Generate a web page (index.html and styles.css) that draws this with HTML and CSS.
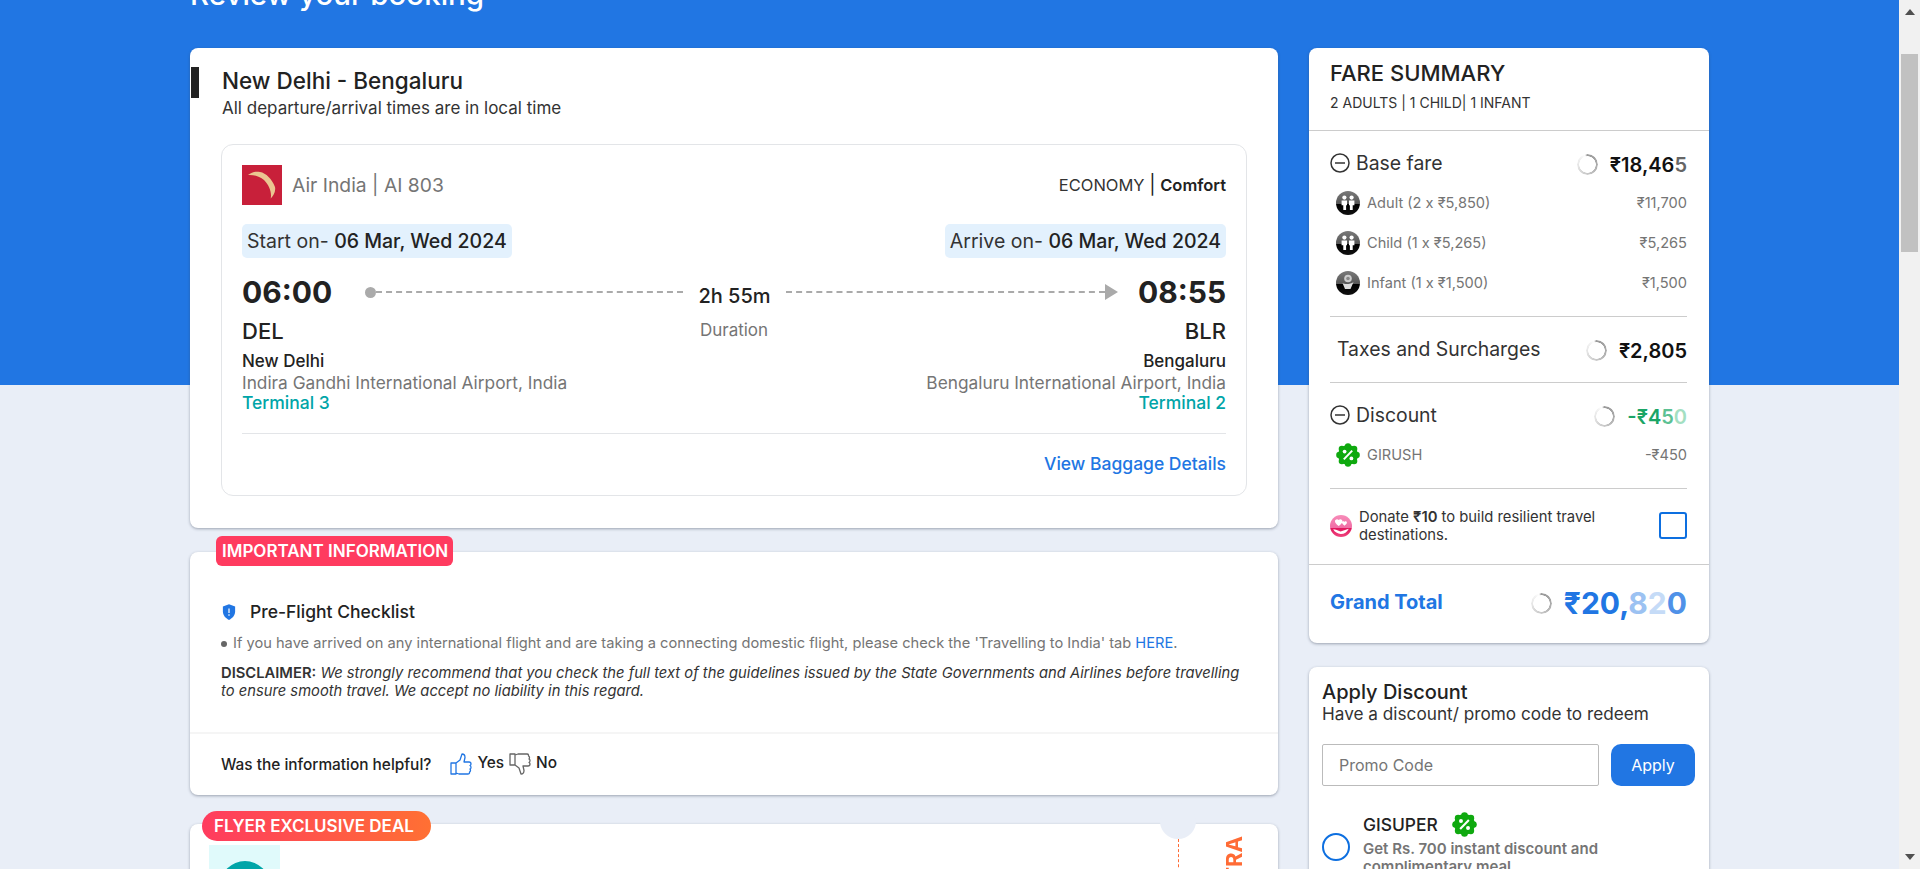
FILE: index.html
```html
<!DOCTYPE html>
<html>
  <head>
    <meta charset="UTF-8">
    <meta name="viewport" content="width=device-width, initial-scale=1.0">
    <title>Review your booking</title>
    <link rel="stylesheet" href="styles.css">
  </head>
  <body>
    <svg class="defs" width="0" height="0">
      <defs>
        <linearGradient id="pax-fill" x1="0" y1="0" x2="0" y2="1">
          <stop offset="0" stop-color="#7a7a7a"/>
          <stop offset="0.56" stop-color="#555"/>
          <stop offset="0.56" stop-color="#000"/>
          <stop offset="1" stop-color="#111"/>
        </linearGradient>
        <linearGradient id="donate-fill" x1="0" y1="0" x2="0" y2="1">
          <stop offset="0" stop-color="#f78cb9"/>
          <stop offset="0.58" stop-color="#f06ea5"/>
          <stop offset="0.58" stop-color="#e0145c"/>
          <stop offset="1" stop-color="#f0457f"/>
        </linearGradient>
        <g id="percent-badge">
          <circle cx="12" cy="12" r="10" fill="#0fa90f"/>
          <circle cx="12" cy="3.4" r="3.2" fill="#0fa90f"/>
          <circle cx="18.1" cy="5.9" r="3.2" fill="#0fa90f"/>
          <circle cx="20.6" cy="12" r="3.2" fill="#0fa90f"/>
          <circle cx="18.1" cy="18.1" r="3.2" fill="#0fa90f"/>
          <circle cx="12" cy="20.6" r="3.2" fill="#0fa90f"/>
          <circle cx="5.9" cy="18.1" r="3.2" fill="#0fa90f"/>
          <circle cx="3.4" cy="12" r="3.2" fill="#0fa90f"/>
          <circle cx="5.9" cy="5.9" r="3.2" fill="#0fa90f"/>
          <path d="M16.2 7.6 7.8 16.4" stroke="#fff" stroke-width="2"/>
          <circle cx="8.6" cy="8.6" r="1.9" fill="#fff"/>
          <circle cx="15.4" cy="15.4" r="1.9" fill="#fff"/>
        </g>
        <g id="minus-circle" fill="none" stroke="#333" stroke-width="1.5">
          <circle cx="10" cy="10" r="9"/>
          <path d="M5 10h10"/>
        </g>
        <g id="two-people" fill="#fff">
          <circle cx="8.4" cy="6.6" r="2.1"/>
          <circle cx="15.6" cy="6.6" r="2.1"/>
          <path d="M5.6 9.6h5.4v4.6h-.9V19H7.3v-4.8h-1.7zM13 9.6h5.4v4.6h-1.7V19h-2.8v-4.8H13z"/>
        </g>
      </defs>
    </svg>

    <div class="page">
      <h1 class="page-title">Review your booking</h1>

      <div class="layout">
        <div class="col-left">

          <section class="card trip">
            <div class="trip-head">
              <span class="trip-bar"></span>
              <div>
                <h2>New Delhi - Bengaluru</h2>
                <p>All departure/arrival times are in local time</p>
              </div>
            </div>

            <div class="leg">
              <div class="leg-top">
                <div class="airline">
                  <svg class="airline-logo" viewBox="0 0 40 40" width="40" height="40">
                    <rect width="40" height="40" fill="#c8203a"/>
                    <path d="M6 10c4-3 8-4 12-3 6 1 12 7 15 15 1 5-2 9-4.300 11.500C30 27 27 20 22 15c-5-4-11-5.500-16-5z" fill="#ebc691"/>
                  </svg>
                  <span>Air India | AI 803</span>
                </div>
                <div class="cabin">ECONOMY <span class="cabin-sep">|</span> <b>Comfort</b></div>
              </div>

              <div class="dates">
                <div class="date-pill">Start on- <b>06 Mar, Wed 2024</b></div>
                <div class="date-pill">Arrive on- <b>06 Mar, Wed 2024</b></div>
              </div>

              <div class="times">
                <div class="time">06:00</div>
                <div class="timeline">
                  <span class="dot"></span>
                  <span class="dash dash-left"></span>
                  <span class="elapsed">2h 55m</span>
                  <span class="dash dash-right"></span>
                  <span class="arrow"></span>
                </div>
                <div class="time time-end">08:55</div>
              </div>

              <div class="codes">
                <div class="code">DEL</div>
                <div class="duration">Duration</div>
                <div class="code code-end">BLR</div>
              </div>

              <div class="places">
                <div class="place">
                  <div class="city">New Delhi</div>
                  <div class="airport">Indira Gandhi International Airport, India</div>
                  <div class="terminal">Terminal 3</div>
                </div>
                <div class="place place-end">
                  <div class="city">Bengaluru</div>
                  <div class="airport">Bengaluru International Airport, India</div>
                  <div class="terminal">Terminal 2</div>
                </div>
              </div>

              <div class="baggage"><a href="#">View Baggage Details</a></div>
            </div>
          </section>

          <section class="card info">
            <div class="tag tag-important">IMPORTANT INFORMATION</div>
            <div class="info-body">
              <div class="info-title">
                <svg viewBox="0 0 16 18" width="14" height="16">
                  <path d="M8 0 15 2.6v5.6c0 4.4-2.9 8-7 9.8-4.1-1.8-7-5.4-7-9.8V2.6z" fill="#2176e3"/>
                  <path d="M8 5v5M8 11.6v1.6" stroke="#fff" stroke-width="1.4"/>
                </svg>
                <span>Pre-Flight Checklist</span>
              </div>
              <div class="info-item">
                <span class="bullet"></span>
                <span>If you have arrived on any international flight and are taking a connecting domestic flight, please check the 'Travelling to India' tab <a href="#">HERE</a>.</span>
              </div>
              <p class="disclaimer"><b>DISCLAIMER:</b> <i>We strongly recommend that you check the full text of the guidelines issued by the State Governments and Airlines before travelling to ensure smooth travel. We accept no liability in this regard.</i></p>
            </div>
            <div class="helpful">
              <span class="helpful-q">Was the information helpful?</span>
              <svg class="thumb-up" viewBox="0 0 24 24" width="24" height="24" fill="none" stroke="#2176e3" stroke-width="1.3" stroke-linejoin="round">
                <path d="M2 11h5v11H2zM7 11l4-3 2-6c2 0 3 1.500 3 3.500L15 10h5c1.500 0 2 1 2 2s-1 1.500-1 1.500 1 .5 1 2-1 1.500-1 1.500 .5 .5 .5 1.500-1 1.500-1 1.500 .5 2-1.500 2H10l-3-1"/>
              </svg>
              <span class="helpful-a">Yes</span>
              <svg class="thumb-down" viewBox="0 0 24 24" width="24" height="24" fill="none" stroke="#666" stroke-width="1.3" stroke-linejoin="round">
                <path d="M2 13h5V2H2zM7 13l4 3 2 6c2 0 3-1.500 3-3.500L15 14h5c1.500 0 2-1 2-2s-1-1.500-1-1.500 1-.5 1-2-1-1.500-1-1.500 .5-.5 .5-1.500-1-1.500-1-1.500 .5-2-1.500-2H10L7 3"/>
              </svg>
              <span class="helpful-a">No</span>
            </div>
          </section>

          <section class="card deal">
            <div class="tag tag-deal">FLYER EXCLUSIVE DEAL</div>
            <div class="deal-notch"></div>
            <div class="deal-cut"></div>
            <div class="deal-logo"><span class="deal-circle"></span></div>
            <div class="deal-side">EXTRA</div>
          </section>
        </div>

        <div class="col-right">
          <section class="card fare">
            <div class="fare-head">
              <h2>FARE SUMMARY</h2>
              <p>2 ADULTS | 1 CHILD| 1 INFANT</p>
            </div>

            <div class="fare-sec fare-base">
              <div class="fare-row">
                <div class="fare-label"><svg viewBox="0 0 20 20" width="20" height="20"><use href="#minus-circle"/></svg>Base fare</div>
                <div class="fare-value"><span class="spinner"></span><span class="amount">₹18,46<span class="fade-dark">5</span></span></div>
              </div>
              <div class="sub-row">
                <div class="sub-label">
                  <svg viewBox="0 0 24 24" width="24" height="24"><circle cx="12" cy="12" r="12" fill="url(#pax-fill)"/><use href="#two-people"/></svg>
                  Adult (2 x ₹5,850)
                </div>
                <div>₹11,700</div>
              </div>
              <div class="sub-row">
                <div class="sub-label">
                  <svg viewBox="0 0 24 24" width="24" height="24"><circle cx="12" cy="12" r="12" fill="url(#pax-fill)"/><use href="#two-people"/></svg>
                  Child (1 x ₹5,265)
                </div>
                <div>₹5,265</div>
              </div>
              <div class="sub-row">
                <div class="sub-label">
                  <svg viewBox="0 0 24 24" width="24" height="24">
                    <circle cx="12" cy="12" r="12" fill="url(#pax-fill)"/>
                    <circle cx="12" cy="7.500" r="3.800" fill="#ccc"/>
                    <circle cx="12" cy="7.500" r="1.800" fill="#888"/>
                    <path d="M6.500 12c2 1.500 8 1.500 11-1l-3 7H9z" fill="#ddd"/>
                  </svg>
                  Infant (1 x ₹1,500)
                </div>
                <div>₹1,500</div>
              </div>
            </div>

            <div class="fare-sec fare-taxes">
              <div class="fare-row">
                <div class="fare-label fare-label-flat">Taxes and Surcharges</div>
                <div class="fare-value"><span class="spinner"></span><span class="amount">₹2,805</span></div>
              </div>
            </div>

            <div class="fare-sec fare-discount">
              <div class="fare-row">
                <div class="fare-label"><svg viewBox="0 0 20 20" width="20" height="20"><use href="#minus-circle"/></svg>Discount</div>
                <div class="fare-value"><span class="spinner"></span><span class="amount amount-green">-₹4<span class="fade-green-1">5</span><span class="fade-green-2">0</span></span></div>
              </div>
              <div class="sub-row">
                <div class="sub-label">
                  <svg viewBox="0 0 24 24" width="24" height="24"><use href="#percent-badge"/></svg>
                  GIRUSH
                </div>
                <div>-₹450</div>
              </div>
            </div>

            <div class="donate">
              <svg viewBox="0 0 24 24" width="22" height="22">
                <circle cx="12" cy="12" r="12" fill="url(#donate-fill)"/>
                <path d="M9.500 5.500c-1.600-1.900-4.600-.4-4 2 .4 1.500 2.700 3.300 4 4.500 1.300-1.200 3.600-3 4-4.500.6-2.400-2.400-3.900-4-2zM15.800 7.500c-1-1.200-3-.3-2.600 1.300.3 1 1.700 2.100 2.600 2.900.9-.8 2.300-1.900 2.600-2.900.4-1.600-1.600-2.500-2.600-1.300z" fill="#fff"/>
                <path d="M3.500 15.500c2.500.5 5 1 8 2.500l9-3c-2 4-5.500 6-9 5.700-3-.2-6.500-2.200-8-5.200z" fill="#fff"/>
              </svg>
              <p>Donate <b>₹10</b> to build resilient travel destinations.</p>
              <span class="checkbox"></span>
            </div>

            <div class="grand">
              <div class="grand-label">Grand Total</div>
              <div class="fare-value"><span class="spinner"></span><span class="grand-amount">₹20,<span class="fade-blue-1">8</span><span class="fade-blue-2">2</span><span class="fade-blue-3">0</span></span></div>
            </div>
          </section>

          <section class="card apply">
            <h3>Apply Discount</h3>
            <p class="apply-sub">Have a discount/ promo code to redeem</p>
            <div class="promo">
              <input class="promo-input" type="text" placeholder="Promo Code">
              <button class="promo-btn">Apply</button>
            </div>
            <div class="coupon">
              <span class="radio"></span>
              <div>
                <div class="coupon-head">GISUPER <svg viewBox="0 0 24 24" width="25" height="25"><use href="#percent-badge"/></svg></div>
                <p class="coupon-text">Get Rs. 700 instant discount and complimentary meal</p>
              </div>
            </div>
          </section>
        </div>
      </div>
    </div>

    <div class="scrollbar">
      <svg class="scroll-arrow" viewBox="0 0 10 6" width="10" height="6"><path d="M5 0 10 6H0z" fill="#505050"/></svg>
      <div class="scroll-thumb"></div>
      <svg class="scroll-arrow scroll-down" viewBox="0 0 10 6" width="10" height="6"><path d="M5 6 10 0H0z" fill="#505050"/></svg>
    </div>
  </body>
</html>
```

FILE: styles.css
```css
* {
  box-sizing: border-box;
  margin: 0;
  padding: 0;
}

html, body {
  height: 869px;
  overflow: hidden;
}

body {
  display: flex;
  font-family: Inter, "Noto Sans", sans-serif;
  color: #222;
}

a {
  color: #2176e3;
  text-decoration: none;
}

.defs {
  position: absolute;
}

/* page is shown scrolled, so the title sits mostly above the fold */
.page {
  flex: 1;
  height: 869px;
  overflow: hidden;
  background: linear-gradient(#2176e3 385px, #e9eef7 385px);
}

.page-title {
  margin: -22px 0 0 190px;
  height: 32px;
  font-size: 29.500px;
  line-height: 32px;
  font-weight: 500;
  color: #fff;
}

.layout {
  display: flex;
  align-items: flex-start;
  gap: 31px;
  margin: 38px 0 0 190px;
}

.col-left {
  width: 1088px;
}

.col-right {
  width: 400px;
}

.card {
  background-color: #fff;
  border-radius: 8px;
  box-shadow: 0 1px 3px rgba(60, 70, 90, 0.45);
}

/* trip card */
.trip {
  height: 480px;
  padding: 19px 31px 0 0;
}

.trip-head {
  display: flex;
  align-items: flex-start;
}

.trip-bar {
  width: 8px;
  height: 31px;
  margin: 0 23px 0 1px;
  background-color: #222;
}

.trip-head h2 {
  margin-top: 1px;
  font-size: 22.500px;
  line-height: 26px;
  font-weight: 500;
}

.trip-head p {
  margin-top: 3px;
  font-size: 17px;
  line-height: 22px;
  color: #333;
}

.leg {
  height: 352px;
  margin: 25px 0 0 31px;
  padding: 20px 20px 0;
  border: 1px solid #e3e5e8;
  border-radius: 12px;
}

.leg-top {
  display: flex;
  justify-content: space-between;
  align-items: center;
}

.airline {
  display: flex;
  align-items: center;
  gap: 10px;
  font-size: 19.300px;
  color: #757575;
}

.cabin {
  margin-top: -1px;
  font-size: 16.500px;
  color: #333;
}

.cabin-sep {
  font-size: 19px;
  color: #222;
}

.cabin b {
  font-weight: 600;
  color: #222;
}

.dates {
  display: flex;
  justify-content: space-between;
  margin-top: 19px;
}

.date-pill {
  height: 34px;
  padding: 0 5px;
  border-radius: 5px;
  background-color: #e3f1fd;
  font-size: 19.500px;
  line-height: 34px;
  color: #333;
}

.date-pill b {
  font-weight: 500;
  color: #222;
}

.times {
  display: flex;
  align-items: flex-start;
  margin-top: 16px;
}

.time {
  width: 88px;
  font-size: 30px;
  line-height: 36px;
  font-weight: 700;
  white-space: nowrap;
}

.time-end {
  text-align: right;
  margin-left: 20px;
}

.timeline {
  flex: 1;
  display: flex;
  align-items: center;
  height: 36px;
  margin-left: 35px;
}

.dot {
  width: 11px;
  height: 11px;
  border-radius: 50%;
  background-color: #aaa;
}

.dash {
  height: 0;
  border-top: 2px dashed #aaa;
}

.dash-left {
  width: 307px;
}

.dash-right {
  flex: 1;
}

.elapsed {
  width: 103px;
  padding-top: 8px;
  text-align: center;
  font-size: 20px;
  font-weight: 500;
  white-space: nowrap;
}

.arrow {
  width: 0;
  height: 0;
  border-left: 13px solid #aaa;
  border-top: 8px solid transparent;
  border-bottom: 8px solid transparent;
}

.codes {
  display: grid;
  grid-template-columns: 1fr auto 1fr;
  align-items: center;
  margin-top: 7px;
}

.code {
  font-size: 22px;
  line-height: 28px;
  font-weight: 500;
}

.code-end {
  text-align: right;
}

.duration {
  margin-top: -2px;
  font-size: 17px;
  color: #757575;
}

.places {
  display: flex;
  justify-content: space-between;
  margin-top: 6px;
}

.place-end {
  text-align: right;
}

.city {
  font-size: 17px;
  line-height: 21px;
  font-weight: 500;
}

.airport {
  font-size: 17.300px;
  line-height: 21px;
  color: #757575;
}

.terminal {
  margin-top: -1px;
  font-size: 17.500px;
  line-height: 21px;
  font-weight: 500;
  color: #00a5a8;
}

.baggage {
  margin-top: 20px;
  padding-top: 19px;
  border-top: 1px solid #e3e5e8;
  text-align: right;
  font-size: 17.500px;
  line-height: 22px;
  font-weight: 500;
}

/* important information */
.tag {
  position: absolute;
  color: #fff;
  font-size: 17px;
  font-weight: 600;
  white-space: nowrap;
}

.info {
  position: relative;
  height: 243px;
  margin-top: 24px;
}

.tag-important {
  left: 26px;
  top: -16px;
  width: 237px;
  height: 30px;
  padding-left: 6px;
  line-height: 30px;
  border-radius: 6px;
  background-color: #ff3b5f;
}

.info-body {
  height: 180px;
  padding: 49px 31px 0;
}

.info-title {
  display: flex;
  align-items: center;
  gap: 14px;
  padding-left: 1px;
  font-size: 17.500px;
  line-height: 22px;
  font-weight: 500;
}

.info-item {
  display: flex;
  align-items: center;
  gap: 6px;
  margin-top: 10px;
  font-size: 14.650px;
  line-height: 20px;
  color: #757575;
}

.bullet {
  width: 6px;
  height: 6px;
  margin-top: 2px;
  border-radius: 50%;
  background-color: #666;
}

.disclaimer {
  margin-top: 11px;
  font-size: 14.750px;
  line-height: 18px;
  color: #333;
}

.disclaimer b {
  font-weight: 600;
}

.helpful {
  display: flex;
  align-items: center;
  height: 61px;
  padding-left: 31px;
  border-top: 2px solid #f5f5f5;
  font-size: 15.400px;
  font-weight: 500;
}

.helpful-q {
  margin-right: 18px;
  padding-top: 2px;
}

.helpful-a {
  margin: -2px 4px 0 4px;
}

/* deal card, cut off by the fold */
.deal {
  position: relative;
  height: 240px;
  margin-top: 29px;
  padding: 21px 0 0 19px;
}

.tag-deal {
  left: 12px;
  top: -13px;
  width: 229px;
  height: 30px;
  padding-left: 12px;
  line-height: 30px;
  border-radius: 15px;
  background: linear-gradient(90deg, #ff3b5f, #ff7033);
}

.deal-notch {
  position: absolute;
  left: 970px;
  top: -21px;
  width: 36px;
  height: 36px;
  border-radius: 50%;
  background-color: #e9eef7;
}

.deal-cut {
  position: absolute;
  left: 988px;
  top: 15px;
  height: 200px;
  border-left: 1px dashed #ff6b35;
}

.deal-logo {
  width: 71px;
  height: 200px;
  padding-top: 16px;
  background-color: #e0fafb;
}

.deal-circle {
  display: block;
  width: 50px;
  height: 50px;
  margin: 0 auto;
  border-radius: 50%;
  background-color: #00a5a8;
}

.deal-side {
  position: absolute;
  left: 1032px;
  top: 12px;
  writing-mode: vertical-rl;
  transform: rotate(180deg);
  font-size: 22px;
  line-height: 24px;
  font-weight: 700;
  color: #ff6b35;
}

/* fare summary */
.fare {
  height: 595px;
}

.fare-head {
  height: 83px;
  padding: 12px 21px 0;
  border-bottom: 1px solid #ccc;
}

.fare-head h2 {
  font-size: 22px;
  line-height: 26px;
  font-weight: 500;
}

.fare-head p {
  margin-top: 7px;
  font-size: 14px;
  line-height: 20px;
  color: #333;
}

.fare-sec {
  margin: 0 22px 0 21px;
  border-bottom: 1px solid #ccc;
}

.fare-base {
  height: 186px;
  padding-top: 20px;
}

.fare-taxes {
  height: 66px;
  padding-top: 20px;
}

.fare-discount {
  height: 106px;
  padding-top: 20px;
}

.fare-row {
  display: flex;
  justify-content: space-between;
  align-items: center;
  height: 24px;
}

.fare-label {
  display: flex;
  align-items: center;
  gap: 6px;
  font-size: 19.400px;
  color: #333;
}

.fare-label-flat {
  padding-left: 7px;
}

.fare-value {
  display: flex;
  align-items: center;
  gap: 12px;
  margin-top: 3px;
}

.spinner {
  width: 21px;
  height: 21px;
  border-radius: 50%;
  background: conic-gradient(#999 0deg, #aaa 90deg, #c4c4c4 170deg, #e4e4e4 260deg, #f4f4f4 320deg, #fff 345deg, #888 360deg);
  -webkit-mask: radial-gradient(circle, transparent 8px, #000 8.500px);
  mask: radial-gradient(circle, transparent 8px, #000 8.500px);
}

.amount {
  font-size: 20px;
  font-weight: 600;
  color: #111;
}

.amount-green {
  color: #1ba566;
}

.fade-dark {
  color: #666;
}

.fade-green-1 {
  color: #5cc193;
}

.fade-green-2 {
  color: #a4dfc2;
}

.sub-row {
  display: flex;
  justify-content: space-between;
  align-items: center;
  height: 24px;
  margin-top: 16px;
  padding-left: 6px;
  font-size: 14.600px;
  color: #757575;
}

.sub-label {
  display: flex;
  align-items: center;
  gap: 7px;
}

.donate {
  display: flex;
  align-items: center;
  gap: 7px;
  height: 75px;
  margin: 0 22px 0 21px;
  padding-bottom: 2px;
}

.donate p {
  width: 270px;
  font-size: 14.800px;
  line-height: 18px;
  color: #333;
}

.donate b {
  font-weight: 600;
}

.checkbox {
  width: 28px;
  height: 27px;
  margin-left: auto;
  border: 2px solid #0d6fe0;
  border-radius: 3px;
}

.grand {
  display: flex;
  justify-content: space-between;
  align-items: center;
  height: 77px;
  padding: 0 22px 3px 21px;
  border-top: 1px solid #ccc;
}

.grand-label {
  font-size: 20px;
  font-weight: 700;
  color: #2176e3;
}

.grand-amount {
  font-size: 30px;
  line-height: 32px;
  font-weight: 700;
  color: #2176e3;
}

.fade-blue-1 {
  color: #9cc2f2;
}

.fade-blue-2 {
  color: #c5dbf7;
}

.fade-blue-3 {
  color: #4f91e8;
}

/* apply discount, cut off by the fold */
.apply {
  height: 240px;
  margin-top: 24px;
  padding: 13px 14px 0 13px;
}

.apply h3 {
  font-size: 20px;
  line-height: 24px;
  font-weight: 500;
}

.apply-sub {
  font-size: 17.200px;
  line-height: 20px;
  color: #333;
}

.promo {
  display: flex;
  gap: 12px;
  margin-top: 20px;
}

.promo-input {
  width: 277px;
  height: 42px;
  padding-left: 16px;
  border: 1px solid #bbb;
  border-radius: 2px;
  font-family: Inter, "Noto Sans", sans-serif;
  font-size: 16px;
}

.promo-input::placeholder {
  color: #757575;
}

.promo-btn {
  width: 84px;
  height: 42px;
  border: none;
  border-radius: 10px;
  background-color: #2176e3;
  color: #fff;
  font-family: Inter, "Noto Sans", sans-serif;
  font-size: 16px;
}

.coupon {
  display: flex;
  align-items: flex-start;
  gap: 13px;
  margin-top: 27px;
}

.radio {
  flex: none;
  width: 28px;
  height: 28px;
  margin-top: 20px;
  border: 2px solid #0d6fe0;
  border-radius: 50%;
}

.coupon-head {
  display: flex;
  align-items: center;
  gap: 14px;
  height: 22px;
  font-size: 17.400px;
  font-weight: 500;
}

.coupon-text {
  max-width: 270px;
  margin-top: 5px;
  font-size: 15px;
  line-height: 18px;
  font-weight: 600;
  color: #757575;
}

/* fake scrollbar, the reference is mid-scroll */
.scrollbar {
  display: flex;
  flex-direction: column;
  align-items: center;
  width: 21px;
  height: 869px;
  background-color: #f1f1f1;
}

.scroll-arrow {
  flex: none;
  margin-top: 9px;
}

.scroll-thumb {
  width: 17px;
  height: 198px;
  margin-top: 39px;
  background-color: #c1c1c1;
}

.scroll-down {
  margin-top: auto;
  margin-bottom: 9px;
}
```
